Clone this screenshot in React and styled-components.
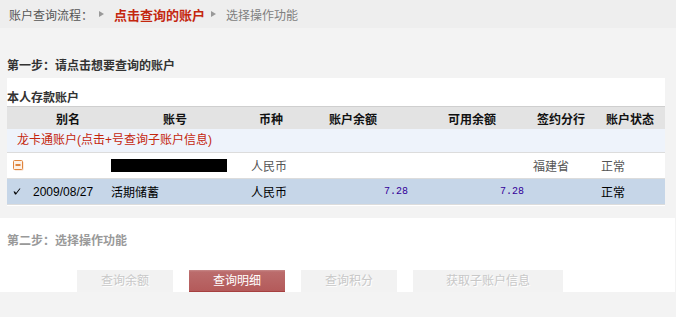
import React from 'react';
import styled, { createGlobalStyle } from 'styled-components';

const GlobalStyle = createGlobalStyle`
  body {
    margin: 0;
    background: #f3f3f3;
    font-family: "Liberation Sans", "Noto Sans CJK SC", sans-serif;
    font-size: 12px;
    color: #333;
  }
`;

const TopBar = styled.div`
  height: 28px;
  background: #eeeeee;
  display: flex;
  align-items: center;
  padding-left: 9px;
  font-size: 12px;
  color: #555;
`;

const Crumb = styled.span`
  color: ${p => (p.$active ? '#c4260e' : p.$muted ? '#808080' : '#555')};
  font-weight: ${p => (p.$active ? 'bold' : 'normal')};
  font-size: ${p => (p.$active ? '13px' : '12px')};
`;

const Arrow = styled.span`
  width: 0;
  height: 0;
  border-top: 3px solid transparent;
  border-bottom: 3px solid transparent;
  border-left: 5px solid #999;
  margin: 0 10px 0 6px;
`;

const Main = styled.div`
  padding: 0 11px 0 7px;
`;

const StepTitle = styled.div`
  font-weight: bold;
  line-height: 14px;
  color: ${p => (p.$disabled ? '#999' : '#333')};
  margin: ${p => (p.$disabled ? '0' : '31px 0 5px 0')};
`;

const Panel = styled.div`
  background: #fff;
  padding-top: 13px;
  padding-bottom: 1px;
`;

const SubTitle = styled.div`
  font-weight: bold;
  line-height: 14px;
  color: #333;
  margin-bottom: 1px;
`;

const cols = '98px 140px 84px 82px 116px 68px 70px';

const HeadRow = styled.div`
  display: grid;
  grid-template-columns: ${cols};
  height: 22px;
  align-items: center;
  background: #e3e3e3;
  border-top: 1px solid #cfcfcf;
  font-weight: bold;
  color: #111;
`;

const HeadCell = styled.div`
  text-align: ${p => p.$align || 'center'};
  padding-left: ${p => p.$pl || 0}px;
  padding-right: ${p => p.$pr || 0}px;
`;

const GroupRow = styled.div`
  height: 23px;
  line-height: 23px;
  background: #eef3fb;
  border-bottom: 1px solid #dcdcdc;
  color: #c4260e;
  padding-left: 10px;
`;

const Row = styled.div`
  display: grid;
  grid-template-columns: ${cols};
  height: 25px;
  align-items: center;
  background: ${p => (p.$selected ? '#c6d6e8' : '#fff')};
  border-bottom: 1px solid #dcdcdc;
  color: ${p => (p.$selected ? '#000' : '#555')};
`;

const Cell = styled.div`
  display: flex;
  align-items: center;
  justify-content: ${p => (p.$right ? 'flex-end' : 'flex-start')};
  padding: ${p => (p.$right ? '0 3px 0 0' : '0 0 0 6px')};
  white-space: nowrap;
`;

const Amount = styled.span`
  font-family: "Liberation Mono", monospace;
  font-size: 10px;
  color: #330099;
`;

const DateText = styled.span`
  margin-left: 12px;
`;

const Redacted = styled.span`
  width: 116px;
  height: 13px;
  background: #000;
`;

const Lower = styled.div`
  margin-top: 12px;
  width: 668px;
  background: #fff;
  padding: 16px 0 0 7px;
`;

const ButtonRow = styled.div`
  display: flex;
  gap: 16px;
  padding-left: 70px;
  margin-top: 22px;
`;

const Button = styled.div`
  width: ${p => p.$w || 96}px;
  height: 22px;
  line-height: 22px;
  text-align: center;
  font-size: 12px;
  box-sizing: border-box;
  ${p =>
    p.$active
      ? `
    background: linear-gradient(#c78989 0px, #bb6c6c 2px, #b45a5a 100%);
    border-bottom: 1px solid #a64040;
    color: #fff;
  `
      : `
    background: #f2f2f2;
    color: #c8c8c8;
    text-shadow: 1px 1px 0 #fff;
  `}
`;

const MinusIcon = () => (
  <svg width="11" height="11" viewBox="0 0 11 11">
    <rect x="1.5" y="1.5" width="9" height="9" rx="1" fill="#f3d8c4" />
    <rect x="0.5" y="0.5" width="9" height="9" rx="1" fill="#fdf1e6" stroke="#e0843c" />
    <rect x="2.5" y="4" width="5" height="2" fill="#e0843c" />
  </svg>
);

const CheckIcon = () => (
  <svg width="8" height="7" viewBox="0 0 8 7">
    <path d="M0.5 3.5 L2 3.5 L3 5 L6.5 0.5 L7.5 0.5 L3 6.5 L2 6.5 Z" fill="#000" />
  </svg>
);

export default function App() {
  return (
    <>
      <GlobalStyle />
      <TopBar>
        <Crumb>账户查询流程：</Crumb>
        <Arrow />
        <Crumb $active>点击查询的账户</Crumb>
        <Arrow />
        <Crumb $muted>选择操作功能</Crumb>
      </TopBar>
      <Main>
        <StepTitle>第一步：请点击想要查询的账户</StepTitle>
        <Panel>
          <SubTitle>本人存款账户</SubTitle>
          <HeadRow>
            <HeadCell $pl={24}>别名</HeadCell>
            <HeadCell>账号</HeadCell>
            <HeadCell $align="left" $pl={14}>币种</HeadCell>
            <HeadCell $align="left">账户余额</HeadCell>
            <HeadCell $align="right" $pr={31}>可用余额</HeadCell>
            <HeadCell>签约分行</HeadCell>
            <HeadCell>账户状态</HeadCell>
          </HeadRow>
          <GroupRow>龙卡通账户(点击+号查询子账户信息)</GroupRow>
          <Row>
            <Cell><MinusIcon /></Cell>
            <Cell><Redacted /></Cell>
            <Cell>人民币</Cell>
            <Cell $right />
            <Cell $right />
            <Cell>福建省</Cell>
            <Cell>正常</Cell>
          </Row>
          <Row $selected>
            <Cell><CheckIcon /><DateText>2009/08/27</DateText></Cell>
            <Cell>活期储蓄</Cell>
            <Cell>人民币</Cell>
            <Cell $right><Amount>7.28</Amount></Cell>
            <Cell $right><Amount>7.28</Amount></Cell>
            <Cell />
            <Cell>正常</Cell>
          </Row>
        </Panel>
      </Main>
      <Lower>
        <StepTitle $disabled>第二步：选择操作功能</StepTitle>
        <ButtonRow>
          <Button>查询余额</Button>
          <Button $active>查询明细</Button>
          <Button>查询积分</Button>
          <Button $w={150}>获取子账户信息</Button>
        </ButtonRow>
      </Lower>
    </>
  );
}
